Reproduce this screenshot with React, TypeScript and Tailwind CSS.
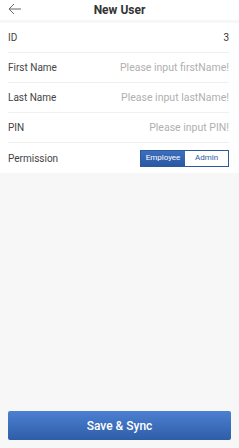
import React, { useState } from "react";

function Row({ label, children, last }: { label: string; children: React.ReactNode; last?: boolean }) {
  return (
    <div className={"ml-2 mr-[10px] flex h-[30px] items-center justify-between " + (last ? "" : "border-b border-[#f0f0f0]")}>
      <span className="text-[10px] text-[#444]">{label}</span>
      {children}
    </div>
  );
}

export default function App() {
  const [perm, setPerm] = useState<"employee" | "admin">("employee");
  return (
    <div className="flex h-[448px] w-[239px] flex-col bg-[#f7f7f7] font-['Roboto',sans-serif]">
      <div className="relative flex h-[20px] items-center justify-center bg-white">
        <button className="absolute left-[8px] top-[3px] text-[#666]">
          <svg width="14" height="12" viewBox="0 0 14 12" fill="none" stroke="currentColor" strokeWidth="1">
            <path d="M13 6H1M6 1L1 6l5 5" />
          </svg>
        </button>
        <h1 className="text-[12px] font-bold text-[#333]">New User</h1>
      </div>
      <div className="mt-[3px] bg-white">
        <Row label="ID">
          <span className="text-[10px] text-[#333]">3</span>
        </Row>
        <Row label="First Name">
          <input className="w-[130px] bg-transparent text-right text-[10.5px] text-[#333] outline-none placeholder:text-[#b0b0b0]" placeholder="Please input firstName!" />
        </Row>
        <Row label="Last Name">
          <input className="w-[130px] bg-transparent text-right text-[10.5px] text-[#333] outline-none placeholder:text-[#b0b0b0]" placeholder="Please input lastName!" />
        </Row>
        <Row label="PIN">
          <input className="w-[130px] bg-transparent text-right text-[10.5px] text-[#333] outline-none placeholder:text-[#b0b0b0]" placeholder="Please input PIN!" />
        </Row>
        <Row label="Permission" last>
          <div className="flex h-[17px] border border-[#2c5aa0]">
            <button
              onClick={() => setPerm("employee")}
              className={"w-[44px] text-[8px] " + (perm === "employee" ? "bg-gradient-to-b from-[#3d6fbf] to-[#2a58a3] text-white" : "bg-white text-[#2c5aa0]")}
            >
              Employee
            </button>
            <button
              onClick={() => setPerm("admin")}
              className={"w-[43px] text-[8px] " + (perm === "admin" ? "bg-gradient-to-b from-[#3d6fbf] to-[#2a58a3] text-white" : "bg-white text-[#2c5aa0]")}
            >
              Admin
            </button>
          </div>
        </Row>
      </div>
      <div className="flex-1" />
      <div className="px-2 pb-[8px]">
        <button className="h-[29px] w-full rounded-[2px] bg-gradient-to-b from-[#4c80d2] to-[#2f5ea8] text-[12px] font-medium text-white">
          Save &amp; Sync
        </button>
      </div>
    </div>
  );
}
